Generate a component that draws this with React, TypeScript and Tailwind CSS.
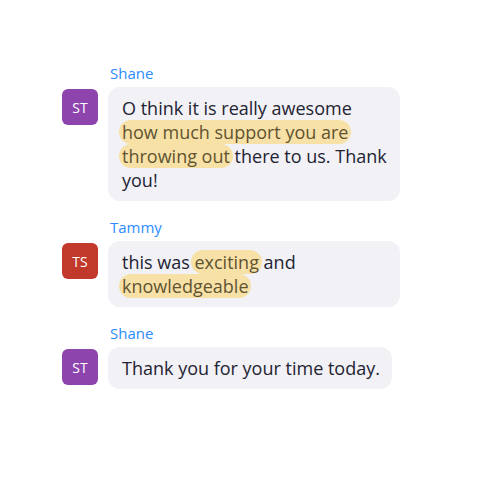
import type { ReactNode } from 'react';

interface MessageProps {
  name: string;
  initials: string;
  avatarClass: string;
  children: ReactNode;
}

function Mark({ children }: { children: ReactNode }) {
  return (
    <span className="bg-[#f7e1a6] text-[#5f5332] rounded-full px-[3px] -mx-[3px] [box-decoration-break:clone] [-webkit-box-decoration-break:clone]">
      {children}
    </span>
  );
}

function Message({ name, initials, avatarClass, children }: MessageProps) {
  return (
    <div>
      <div className="pl-[48px] text-[15px] leading-[18px] text-[#2d8cff] mb-[5px]">{name}</div>
      <div className="flex items-start gap-[10px]">
        <div
          className={`w-9 h-9 mt-[2px] shrink-0 rounded-[6px] flex items-center justify-center text-white text-[14px] ${avatarClass}`}
        >
          {initials}
        </div>
        <div className="max-w-[292px] bg-[#f1f1f6] rounded-[12px] pl-[14px] pr-[12px] py-[9px] text-[18px] leading-[24px] text-[#232333]">
          {children}
        </div>
      </div>
    </div>
  );
}

export default function App() {
  return (
    <div className="w-[500px] h-[500px] bg-white pt-[64px] pl-[62px] flex flex-col gap-[17px] font-['Open_Sans',sans-serif]">
      <Message name="Shane" initials="ST" avatarClass="bg-[#8e44ad]">
        O think it is really awesome <Mark>how much support you are throwing out</Mark> there to us. Thank you!
      </Message>
      <Message name="Tammy" initials="TS" avatarClass="bg-[#c0392b]">
        this was <Mark>exciting</Mark> and <Mark>knowledgeable</Mark>
      </Message>
      <Message name="Shane" initials="ST" avatarClass="bg-[#8e44ad]">
        Thank you for your time today.
      </Message>
    </div>
  );
}
